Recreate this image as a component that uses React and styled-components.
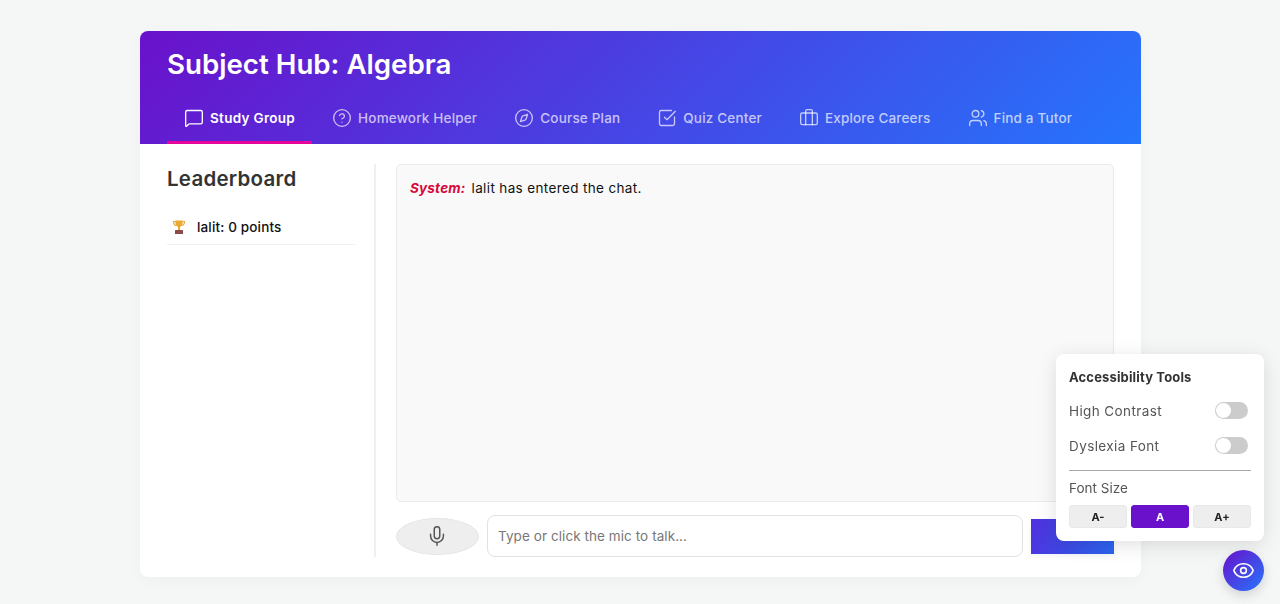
import React from 'react';
import styled, { createGlobalStyle } from 'styled-components';
import { MessageSquare, CircleHelp, Compass, SquareCheckBig, Briefcase, Users, Mic, Eye } from 'lucide-react';

const Global = createGlobalStyle`
  html, body { margin: 0; padding: 0; height: 100%; overflow: hidden; }
  body { background: #f4f7f6; font-family: Inter, "Open Sans", sans-serif; color: #333; }
  * { box-sizing: border-box; }
`;
const Page = styled.div`
  padding: 31px 139px 27px 140px;
  height: 604px;
`;
const Card = styled.main`
  height: 546px;
  background: #fff;
  border-radius: 8px;
  overflow: hidden;
  box-shadow: 0 4px 15px rgba(0,0,0,.03);
  display: flex;
  flex-direction: column;
`;
const Header = styled.header`
  height: 113px;
  flex: none;
  padding: 15px 27px 0;
  background: linear-gradient(135deg, #6a11cb 0%, #2575fc 100%);
  color: #fff;
  display: flex;
  flex-direction: column;
`;
const Title = styled.h1`
  margin: 0;
  font-size: 27.7px;
  line-height: 36px;
  font-weight: 600;
`;
const Tabs = styled.nav`
  margin-top: auto;
  display: flex;
  gap: 3px;
`;
const Tab = styled.div`
  height: 47px;
  padding: 0 17px 2px;
  display: flex;
  align-items: center;
  gap: 6px;
  font-size: 13.5px;
  letter-spacing: ${p => (p.$active ? '.3px' : '.18px')};
  font-weight: ${p => (p.$active ? 600 : 500)};
  color: ${p => (p.$active ? '#fff' : 'rgba(255,255,255,.7)')};
  border-bottom: 3px solid ${p => (p.$active ? '#e6059a' : 'transparent')};
  svg { width: 20px; height: 20px; stroke-width: 1.6; flex: none; }
`;
const Body = styled.div`
  flex: 1;
  display: flex;
  padding: 20px 27px;
  min-height: 0;
`;
const Side = styled.aside`
  width: 209px;
  flex: none;
  padding-right: 19px;
  border-right: 2px solid #f0f0f0;
`;
const SideTitle = styled.h2`
  margin: 0 0 18px;
  font-size: 20.5px;
  line-height: 30px;
  font-weight: 600;
  letter-spacing: .25px;
  color: #333;
`;
const Leader = styled.div`
  display: flex;
  align-items: center;
  gap: 10px;
  height: 34px;
  padding: 0 4px 2px;
  font-size: 13.5px;
  letter-spacing: .15px;
  font-weight: 500;
  color: #111;
  border-bottom: 1px solid #f0f0f0;
  margin-top: -1px;
`;
const Trophy = styled.svg`
  width: 16px;
  height: 16px;
  flex: none;
`;
const ChatArea = styled.section`
  flex: 1;
  min-width: 0;
  margin-left: 20px;
  display: flex;
  flex-direction: column;
`;
const Log = styled.div`
  height: 338px;
  flex: none;
  background: #f9f9f9;
  border: 1px solid #eaeaea;
  border-radius: 5px;
  padding: 13px 13px;
  font-size: 13.5px;
  line-height: 20px;
  letter-spacing: .36px;
  color: #111;
`;
const Sender = styled.strong`
  color: #d6093d;
  font-style: italic;
  font-weight: 700;
  letter-spacing: .2px;
  margin-right: 6px;
`;
const InputRow = styled.div`
  margin-top: 13px;
  height: 42px;
  display: flex;
  align-items: center;
  gap: 8px;
`;
const MicButton = styled.button`
  width: 83px;
  height: 37px;
  flex: none;
  border: 1px solid #e5e5e5;
  border-radius: 50%;
  background: #eeeeee;
  color: #555;
  display: flex;
  align-items: center;
  justify-content: center;
  padding: 0 1px 0 0;
  svg { width: 22px; height: 22px; stroke-width: 1.6; }
`;
const TextInput = styled.input`
  flex: 1;
  min-width: 0;
  height: 42px;
  border: 1px solid #e2e2e2;
  border-radius: 8px;
  padding: 0 10px;
  font-family: inherit;
  font-size: 13.5px;
  letter-spacing: .07px;
  background: #fff;
  &::placeholder { color: #777; opacity: 1; }
`;
const SendButton = styled.button`
  width: 83px;
  height: 35px;
  flex: none;
  border: 0;
  padding: 0;
  background: linear-gradient(110deg, #5030dd 0%, #2a66f0 100%);
  box-shadow: 0 2px 6px rgba(0,0,0,.05);
`;
const Panel = styled.aside`
  position: fixed;
  left: 1056px;
  top: 354px;
  width: 208px;
  height: 187px;
  background: #fff;
  border-radius: 8px;
  box-shadow: 0 4px 20px rgba(0,0,0,.12);
  padding: 13px 13px 0;
`;
const PanelTitle = styled.h3`
  margin: 0 0 6px;
  font-size: 13px;
  line-height: 20px;
  font-weight: 700;
  letter-spacing: .15px;
  color: #333;
`;
const ToggleRow = styled.div`
  height: 35px;
  display: flex;
  align-items: center;
  justify-content: space-between;
  padding-right: 3px;
  font-size: 13.5px;
  letter-spacing: .4px;
  color: #555;
`;
const Toggle = styled.span`
  width: 33px;
  height: 17px;
  border-radius: 9px;
  background: #cccccc;
  position: relative;
  &::before {
    content: '';
    position: absolute;
    left: 1px;
    top: 1px;
    width: 15px;
    height: 15px;
    border-radius: 50%;
    background: #fff;
  }
`;
const Divider = styled.hr`
  border: 0;
  border-top: 1px solid #aaa;
  margin: 7px 0 0;
`;
const SizeLabel = styled.div`
  margin-top: 8px;
  font-size: 13.5px;
  line-height: 18px;
  color: #555;
`;
const SizeButtons = styled.div`
  margin-top: 8px;
  display: grid;
  grid-template-columns: repeat(3, 1fr);
  gap: 4px;
`;
const SizeButton = styled.button`
  height: 23px;
  padding: 0;
  border-radius: 3px;
  border: 1px solid ${p => (p.$active ? '#6a11cb' : '#e8e8e8')};
  background: ${p => (p.$active ? '#6a11cb' : '#eeeeee')};
  color: ${p => (p.$active ? '#fff' : '#222')};
  font-family: inherit;
  font-size: 11px;
  font-weight: 700;
`;
const Fab = styled.button`
  position: fixed;
  left: 1223px;
  top: 550px;
  width: 41px;
  height: 41px;
  border: 0;
  padding: 0;
  border-radius: 50%;
  background: linear-gradient(135deg, #6a11cb 0%, #2575fc 100%);
  color: #fff;
  display: flex;
  align-items: center;
  justify-content: center;
  box-shadow: 0 4px 12px rgba(0,0,0,.15);
  svg { width: 23px; height: 23px; stroke-width: 1.7; }
`;

const tabs = [
  ['Study Group', MessageSquare, true],
  ['Homework Helper', CircleHelp],
  ['Course Plan', Compass],
  ['Quiz Center', SquareCheckBig],
  ['Explore Careers', Briefcase],
  ['Find a Tutor', Users],
];

export default function App() {
  return (
    <Page>
      <Global />
      <Card>
        <Header>
          <Title>Subject Hub: Algebra</Title>
          <Tabs>
            {tabs.map(([label, Icon, active]) => (
              <Tab key={label} $active={active}><Icon />{label}</Tab>
            ))}
          </Tabs>
        </Header>
        <Body>
          <Side>
            <SideTitle>Leaderboard</SideTitle>
            <Leader>
              <Trophy viewBox="0 0 16 16" aria-hidden="true">
                <path d="M4.500 2.500H2.500c0 2.500 1 3.800 3 4M11.500 2.500h2c0 2.500-1 3.800-3 4" fill="none" stroke="#e3a53a" strokeWidth="1.100" />
                <path d="M4.200 1.500h7.600c0 3.800-1 5.800-2.800 6.500v3H7V8C5.200 7.300 4.200 5.300 4.200 1.500z" fill="#eda92f" />
                <rect x="4" y="11" width="8" height="4" rx=".6" fill="#8c4a4a" />
              </Trophy>
              lalit: 0 points
            </Leader>
          </Side>
          <ChatArea>
            <Log><Sender>System:</Sender>lalit has entered the chat.</Log>
            <InputRow>
              <MicButton aria-label="Microphone"><Mic /></MicButton>
              <TextInput placeholder="Type or click the mic to talk..." />
              <SendButton aria-label="Send" />
            </InputRow>
          </ChatArea>
        </Body>
      </Card>
      <Panel>
        <PanelTitle>Accessibility Tools</PanelTitle>
        <ToggleRow>High Contrast<Toggle /></ToggleRow>
        <ToggleRow>Dyslexia Font<Toggle /></ToggleRow>
        <Divider />
        <SizeLabel>Font Size</SizeLabel>
        <SizeButtons>
          <SizeButton>A-</SizeButton>
          <SizeButton $active>A</SizeButton>
          <SizeButton>A+</SizeButton>
        </SizeButtons>
      </Panel>
      <Fab aria-label="Accessibility"><Eye /></Fab>
    </Page>
  );
}
